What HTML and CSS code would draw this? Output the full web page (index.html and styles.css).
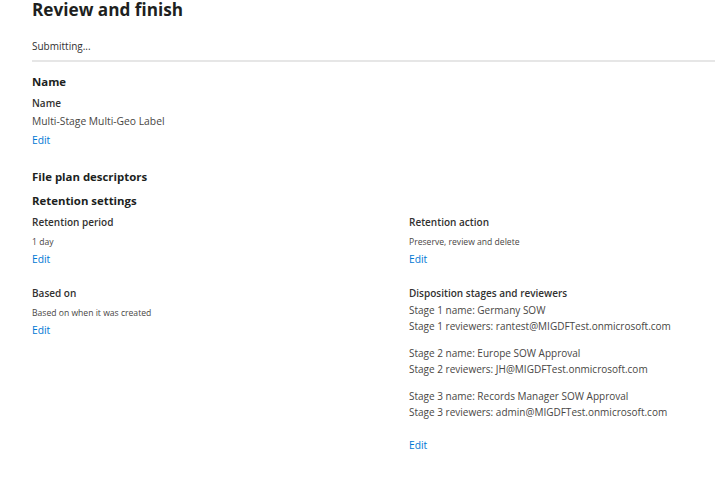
FILE: index.html
```html
<!DOCTYPE html>
<html>
<head>
<meta charset="utf-8">
<link rel="stylesheet" href="styles.css">
</head>
<body>
<div class="page">
  <h1 class="title">Review and finish</h1>
  <div class="status">Submitting...</div>
  <div class="divider"></div>

  <section class="block">
    <h2 class="section-title">Name</h2>
    <div class="label">Name</div>
    <div class="value">Multi-Stage Multi-Geo Label</div>
    <a class="edit" href="#">Edit</a>
  </section>

  <h2 class="section-title fp">File plan descriptors</h2>
  <h2 class="section-title rs">Retention settings</h2>

  <div class="grid">
    <div class="cell">
      <div class="label">Retention period</div>
      <div class="small">1 day</div>
      <a class="edit" href="#">Edit</a>
    </div>
    <div class="cell">
      <div class="label">Retention action</div>
      <div class="small">Preserve, review and delete</div>
      <a class="edit" href="#">Edit</a>
    </div>
    <div class="cell second">
      <div class="label">Based on</div>
      <div class="small">Based on when it was created</div>
      <a class="edit" href="#">Edit</a>
    </div>
    <div class="cell second">
      <div class="label">Disposition stages and reviewers</div>
      <div class="stage">
        <div class="line">Stage 1 name: Germany SOW</div>
        <div class="line">Stage 1 reviewers: rantest@MIGDFTest.onmicrosoft.com</div>
      </div>
      <div class="stage">
        <div class="line">Stage 2 name: Europe SOW Approval</div>
        <div class="line">Stage 2 reviewers: JH@MIGDFTest.onmicrosoft.com</div>
      </div>
      <div class="stage">
        <div class="line">Stage 3 name: Records Manager SOW Approval</div>
        <div class="line">Stage 3 reviewers: admin@MIGDFTest.onmicrosoft.com</div>
      </div>
      <a class="edit last" href="#">Edit</a>
    </div>
  </div>
</div>
</body>
</html>
```
FILE: styles.css
```css
html, body {
  margin: 0;
  padding: 0;
  background: #ffffff;
}
body {
  font-family: "Segoe UI", "Open Sans", "Noto Sans", sans-serif;
  color: #323130;
}
.page {
  padding: 0 0 0 32px;
}
.title {
  margin: 0;
  font-size: 17.2px;
  line-height: 20px;
  font-weight: 700;
  color: #201f1e;
}
.status {
  margin-top: 18px;
  font-size: 10px;
  line-height: 16px;
  color: #323130;
}
.divider {
  margin-top: 6px;
  height: 2px;
  background: #e6e6e6;
}
.block {
  margin-top: 11px;
}
.section-title {
  margin: 0;
  font-size: 11.4px;
  line-height: 18px;
  font-weight: 700;
  color: #201f1e;
}
.label {
  margin-top: 3px;
  font-size: 10px;
  line-height: 17px;
  font-weight: 600;
  color: #323130;
}
.block .label {
  margin-top: 4px;
}
.value {
  margin-top: 0;
  font-size: 10.3px;
  line-height: 18px;
  color: #484644;
}
.edit {
  display: block;
  margin-top: 1px;
  font-size: 10.3px;
  line-height: 18px;
  color: #0078d4;
  text-decoration: none;
}
.fp {
  margin-top: 19px;
}
.rs {
  margin-top: 6px;
}
.grid {
  display: grid;
  grid-template-columns: 377px 1fr;
  margin-top: 1px;
}
.small {
  margin-top: 3px;
  font-size: 8.6px;
  line-height: 16px;
  color: #484644;
}
.cell .edit {
  margin-top: 0;
}
.second {
  margin-top: 14px;
}
.stage {
  margin-bottom: 11px;
}
.line {
  font-size: 10px;
  line-height: 16px;
  color: #484644;
}
.cell .edit.last {
  margin-top: 16px;
}
```
